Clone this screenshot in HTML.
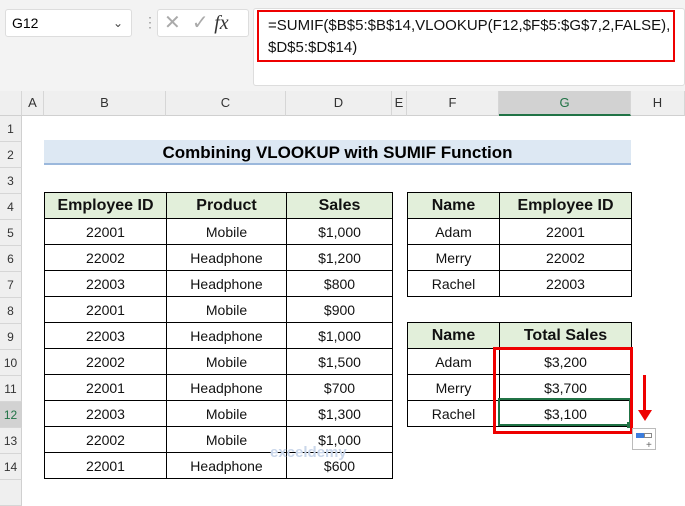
<html><head><style>
body{margin:0;width:685px;height:490px;background:#fff;font-family:"Liberation Sans",Calibri,sans-serif;position:relative;overflow:hidden}
.a{position:absolute;box-sizing:border-box}
.top{left:0;top:0;width:685px;height:91px;background:#f3f3f3}
.ch{top:91px;height:25px;background:#efefef;border-bottom:1px solid #d0d0d0;border-right:1px solid #d6d6d6;font-size:13px;color:#333;text-align:center;line-height:24px}
.rh{left:0;width:22px;height:26px;background:#efefef;border-bottom:1px solid #d6d6d6;border-right:1px solid #d0d0d0;font-size:12px;color:#333;text-align:center;line-height:26px}
table{border-collapse:collapse;font-size:14px;text-align:center;color:#111;table-layout:fixed}
td{border:1px solid #000;padding:0;height:26px;box-sizing:border-box;white-space:nowrap}
tr.h td{background:#e2efda;font-weight:bold;font-size:16px}
</style></head><body>
<div class="a top"></div>
<div class="a" style="left:5px;top:9px;width:127px;height:28px;background:#fff;border:1px solid #ddd;border-radius:3px;font-size:14px;line-height:26px;padding-left:6px">G12<span style="position:absolute;right:8px;top:0;font-size:12px;color:#444">&#8964;</span></div>
<div class="a" style="left:143px;top:14px;color:#999;font-size:14px">&#8942;</div>
<div class="a" style="left:157px;top:9px;width:92px;height:28px;background:#fff;border:1px solid #ddd;border-radius:3px;font-size:20px;color:#aaa;line-height:26px;padding-left:6px">&#10005;&nbsp; &#10003;&nbsp;<i style="font-family:'Liberation Serif',serif;color:#333">fx</i></div>
<div class="a" style="left:253px;top:8px;width:432px;height:78px;background:#fff;border:1px solid #ddd;border-radius:3px"></div>
<div class="a" style="left:257px;top:10px;width:418px;height:52px;border:2px solid #e00;font-size:15px;line-height:22px;padding:3px 0 0 9px;color:#111">=SUMIF($B$5:$B$14,VLOOKUP(F12,$F$5:$G$7,2,FALSE),<br>$D$5:$D$14)</div>
<div class="a ch" style="left:0;width:22px"></div>
<div class="a ch" style="left:22px;width:22px">A</div>
<div class="a ch" style="left:44px;width:122px">B</div>
<div class="a ch" style="left:166px;width:120px">C</div>
<div class="a ch" style="left:286px;width:106px">D</div>
<div class="a ch" style="left:392px;width:15px">E</div>
<div class="a ch" style="left:407px;width:92px">F</div>
<div class="a ch" style="left:499px;width:132px;background:#d2d2d2;border-bottom:2px solid #217346;color:#217346">G</div>
<div class="a ch" style="left:631px;width:54px">H</div>
<div class="a rh" style="top:116px">1</div><div class="a rh" style="top:142px">2</div><div class="a rh" style="top:168px">3</div><div class="a rh" style="top:194px">4</div><div class="a rh" style="top:220px">5</div><div class="a rh" style="top:246px">6</div><div class="a rh" style="top:272px">7</div><div class="a rh" style="top:298px">8</div><div class="a rh" style="top:324px">9</div><div class="a rh" style="top:350px">10</div><div class="a rh" style="top:376px">11</div><div class="a rh" style="top:402px;background:#d2d2d2;color:#217346">12</div><div class="a rh" style="top:428px">13</div><div class="a rh" style="top:454px">14</div><div class="a rh" style="top:480px"></div>
<div class="a" style="left:44px;top:140px;width:587px;height:25px;background:#dde8f3;border-bottom:2px solid #9bb8dc;font-weight:bold;font-size:17px;text-align:center;line-height:25px">Combining VLOOKUP with SUMIF Function</div>
<div class="a" style="left:44px;top:192px">
<table style="width:348px">
<colgroup><col style="width:122px"><col style="width:120px"><col style="width:106px"></colgroup>
<tr class="h"><td>Employee ID</td><td>Product</td><td>Sales</td></tr>
<tr><td>22001</td><td>Mobile</td><td>$1,000</td></tr>
<tr><td>22002</td><td>Headphone</td><td>$1,200</td></tr>
<tr><td>22003</td><td>Headphone</td><td>$800</td></tr>
<tr><td>22001</td><td>Mobile</td><td>$900</td></tr>
<tr><td>22003</td><td>Headphone</td><td>$1,000</td></tr>
<tr><td>22002</td><td>Mobile</td><td>$1,500</td></tr>
<tr><td>22001</td><td>Headphone</td><td>$700</td></tr>
<tr><td>22003</td><td>Mobile</td><td>$1,300</td></tr>
<tr><td>22002</td><td>Mobile</td><td>$1,000</td></tr>
<tr><td>22001</td><td>Headphone</td><td>$600</td></tr>
</table></div>
<div class="a" style="left:407px;top:192px">
<table style="width:224px">
<colgroup><col style="width:92px"><col style="width:132px"></colgroup>
<tr class="h"><td>Name</td><td>Employee ID</td></tr>
<tr><td>Adam</td><td>22001</td></tr>
<tr><td>Merry</td><td>22002</td></tr>
<tr><td>Rachel</td><td>22003</td></tr>
</table></div>
<div class="a" style="left:407px;top:322px">
<table style="width:224px">
<colgroup><col style="width:92px"><col style="width:132px"></colgroup>
<tr class="h"><td>Name</td><td>Total Sales</td></tr>
<tr><td>Adam</td><td>$3,200</td></tr>
<tr><td>Merry</td><td>$3,700</td></tr>
<tr><td>Rachel</td><td>$3,100</td></tr>
</table></div>
<div class="a" style="left:498px;top:398px;width:133px;height:28px;border:2px solid #217346"></div>
<div class="a" style="left:627px;top:422px;width:6px;height:6px;background:#217346"></div>
<div class="a" style="left:493px;top:347px;width:140px;height:87px;border:3px solid #e00"></div>
<div class="a" style="left:643px;top:375px;width:3px;height:38px;background:#e00"></div>
<div class="a" style="left:638px;top:410px;width:0;height:0;border-left:7px solid transparent;border-right:7px solid transparent;border-top:11px solid #e00"></div>
<div class="a" style="left:632px;top:428px;width:24px;height:22px;border:1px solid #bbb;background:#fff"><div class="a" style="left:3px;top:4px;width:8px;height:5px;background:#3b7ddd"></div><div class="a" style="left:11px;top:4px;width:8px;height:5px;border:1px solid #888"></div><div class="a" style="left:13px;top:11px;font-size:10px;color:#666">+</div></div>
<div class="a" style="left:270px;top:444px;font-size:15px;color:#c9d6ea;font-weight:bold">exceldemy</div>
</body></html>
